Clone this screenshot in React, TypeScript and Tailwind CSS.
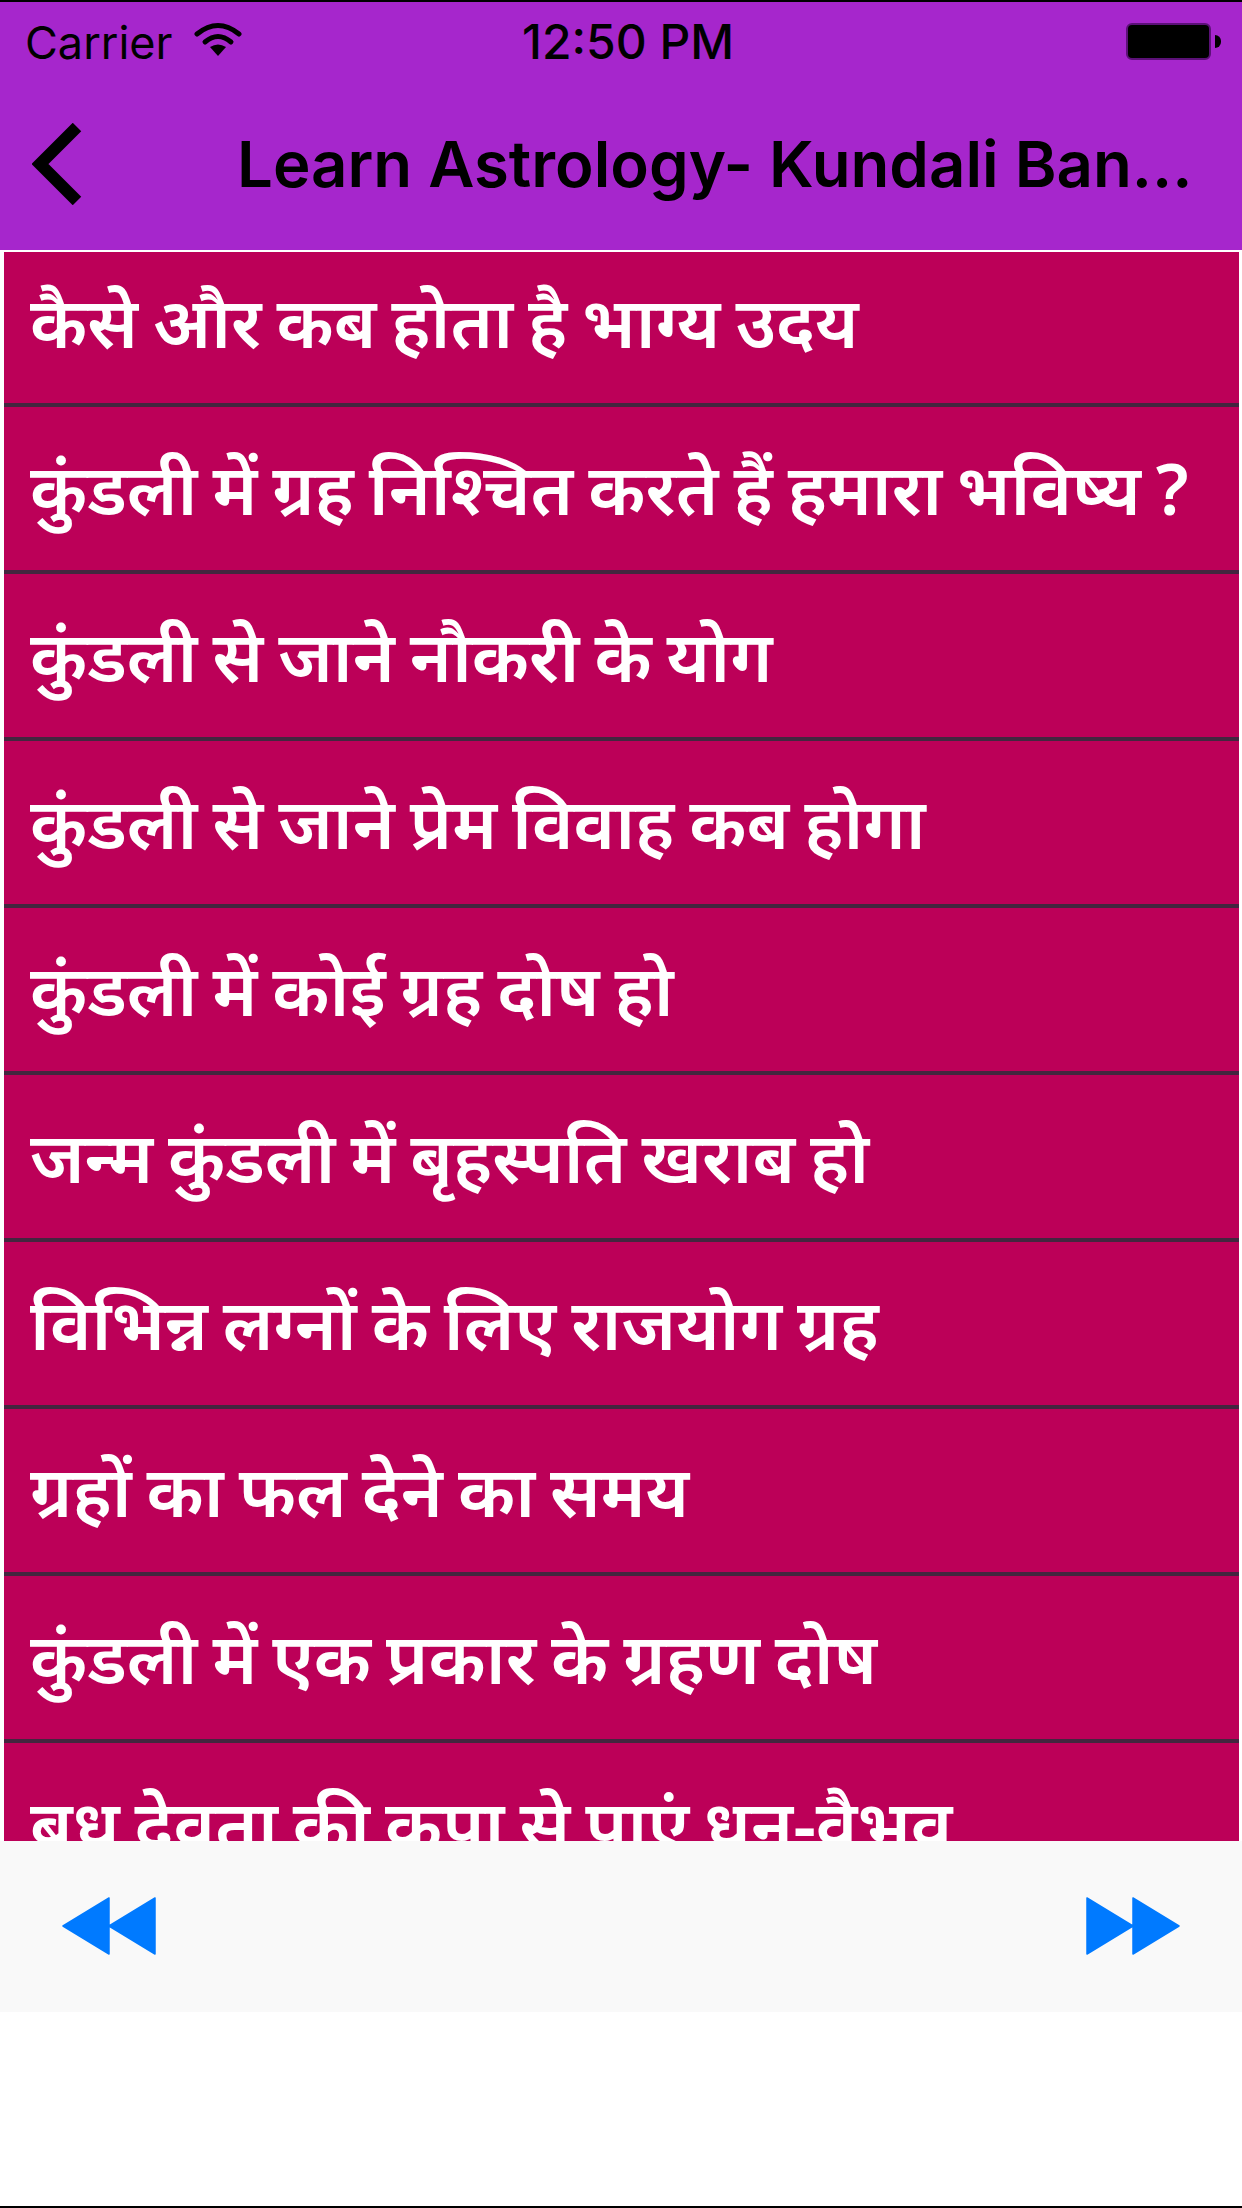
const rows = [
  "कैसे और कब होता है भाग्य उदय",
  "कुंडली में ग्रह निश्चित करते हैं हमारा भविष्य ?",
  "कुंडली से जाने नौकरी के योग",
  "कुंडली से जाने प्रेम विवाह कब होगा",
  "कुंडली में कोई ग्रह दोष हो",
  "जन्म कुंडली में बृहस्पति खराब हो",
  "विभिन्न लग्नों के लिए राजयोग ग्रह",
  "ग्रहों का फल देने का समय",
  "कुंडली में एक प्रकार के ग्रहण दोष",
  "बुध देवता की कृपा से पाएं धन-वैभव",
]

export default function App() {
  return (
    <div className="w-[1242px] h-[2208px] flex flex-col bg-white border-y-2 border-black font-['Inter','Noto_Sans','Noto_Sans_Devanagari',sans-serif] overflow-hidden">
      {/* status bar + nav */}
      <div className="h-[248px] shrink-0 bg-[#a626cc] text-black flex flex-col">
        <div className="h-[70px] flex items-center justify-between pl-[25px] pr-[21px] pt-[10px] relative">
          <div className="flex items-center gap-[21px]">
            <span className="text-[45px] leading-none">Carrier</span>
            <svg width="48" height="36" viewBox="0 0 48 36" className="-mt-[5px]">
              <path d="M3 12 Q24 -5 45 12" fill="none" stroke="#000" strokeWidth="5" strokeLinecap="round" />
              <path d="M11 20 Q24 9 37 20" fill="none" stroke="#000" strokeWidth="5" strokeLinecap="round" />
              <path d="M24 34 L16 25 Q24 20 32 25 Z" fill="#000" />
            </svg>
          </div>
          <span className="absolute left-[522px] text-[48px] leading-none font-medium">12:50 PM</span>
          <div className="flex items-center gap-[4px] -mt-[1px]">
            <div className="w-[85px] h-[37px] bg-black rounded-[6px] border-2 border-[#5c1078]" />
            <div className="w-[6px] h-[13px] bg-black rounded-r-full" />
          </div>
        </div>
        <div className="flex-1 flex items-center pl-[32px] pt-[6px]">
          <svg width="50" height="82" viewBox="0 0 50 82" className="shrink-0">
            <path d="M45 4 L8 41 L45 78" fill="none" stroke="#000" strokeWidth="12" />
          </svg>
          <span className="ml-[155px] text-[63.5px] leading-none font-semibold whitespace-nowrap">Learn Astrology- Kundali Ban...</span>
        </div>
      </div>

      {/* list */}
      <div className="h-[1591px] shrink-0 border-t-2 border-white px-[4px] pr-[3px] overflow-hidden">
        <div className="bg-[#bc0058] -mt-[12px]">
          {rows.map((r) => (
            <div key={r} className="h-[167px] border-b-4 border-[#43263f] flex items-center pl-[26px] pb-[3px] text-white text-[71px] leading-none font-semibold font-['Noto_Sans','Noto_Sans_Devanagari','Inter',sans-serif] [word-spacing:-3.5px] whitespace-nowrap">
              {r}
            </div>
          ))}
        </div>
      </div>

      {/* toolbar */}
      <div className="h-[171px] shrink-0 bg-[#f9f9f9] flex items-center justify-between px-[62px] pb-[2px]">
        <svg width="94" height="58" viewBox="0 0 94 58">
          <path d="M47 1 V57 L1 29 Z M93 1 V57 L47 29 Z" fill="#007aff" stroke="#007aff" strokeWidth="1.5" strokeLinejoin="round" />
        </svg>
        <svg width="94" height="58" viewBox="0 0 94 58">
          <path d="M1 1 V57 L47 29 Z M47 1 V57 L93 29 Z" fill="#007aff" stroke="#007aff" strokeWidth="1.5" strokeLinejoin="round" />
        </svg>
      </div>
    </div>
  )
}
